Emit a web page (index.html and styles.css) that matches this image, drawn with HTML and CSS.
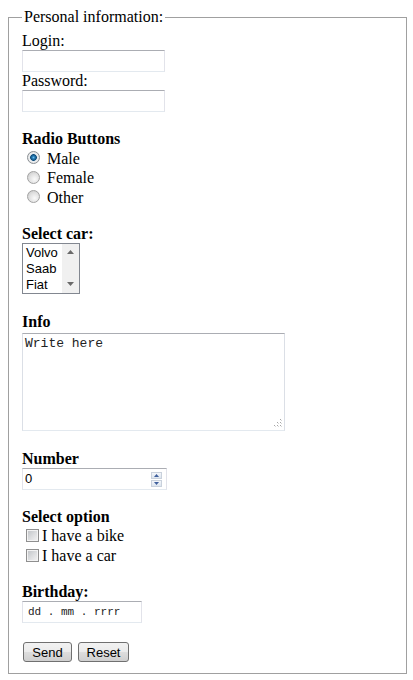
FILE: index.html
```html
<!DOCTYPE html>
<html lang="en">
<head>
<meta charset="utf-8">
<title>Form</title>
<link rel="stylesheet" href="styles.css">
</head>
<body>
<form class="form" onsubmit="return false">
  <fieldset class="fs">
    <legend class="legend">Personal information:</legend>
    <div class="content">
      <label class="lbl" for="login">Login:</label>
      <input class="text w143" id="login" type="text">
      <label class="lbl" for="pw">Password:</label>
      <input class="text w143" id="pw" type="password">

      <div class="heading mt18">Radio Buttons</div>
      <div class="group">
        <label class="radio-row"><input class="radio" type="radio" name="gender" checked><span class="opt-text">Male</span></label>
        <label class="radio-row"><input class="radio" type="radio" name="gender"><span class="opt-text">Female</span></label>
        <label class="radio-row"><input class="radio" type="radio" name="gender"><span class="opt-text">Other</span></label>
      </div>

      <div class="heading mt18">Select car:</div>
      <div class="listbox">
        <div class="options">
          <div class="option">Volvo</div>
          <div class="option">Saab</div>
          <div class="option">Fiat</div>
        </div>
        <div class="vscroll">
          <span class="sbtn"><svg class="arr" width="7" height="4" viewBox="0 0 7 4"><polygon points="0,4 7,4 3.5,0" fill="#6a6a6a"/></svg></span>
          <span class="sbtn"><svg class="arr" width="7" height="4" viewBox="0 0 7 4"><polygon points="0,0 7,0 3.5,4" fill="#6a6a6a"/></svg></span>
        </div>
      </div>

      <div class="heading mt19">Info</div>
      <div class="tawrap">
        <textarea class="area">Write here</textarea>
        <svg class="grip" width="9" height="9" viewBox="0 0 9 9">
          <rect x="6" y="0" width="1" height="1" fill="#a6a6a6"/><rect x="7" y="1" width="1" height="1" fill="#d8d8d8"/>
          <rect x="3" y="3" width="1" height="1" fill="#a6a6a6"/><rect x="4" y="4" width="1" height="1" fill="#d8d8d8"/>
          <rect x="6" y="3" width="1" height="1" fill="#a6a6a6"/><rect x="7" y="4" width="1" height="1" fill="#d8d8d8"/>
          <rect x="0" y="6" width="1" height="1" fill="#a6a6a6"/><rect x="1" y="7" width="1" height="1" fill="#d8d8d8"/>
          <rect x="3" y="6" width="1" height="1" fill="#a6a6a6"/><rect x="4" y="7" width="1" height="1" fill="#d8d8d8"/>
          <rect x="6" y="6" width="1" height="1" fill="#a6a6a6"/><rect x="7" y="7" width="1" height="1" fill="#d8d8d8"/>
        </svg>
      </div>

      <div class="heading mt19">Number</div>
      <div class="numbox">
        <input class="numinput" type="text" value="0">
        <div class="spin">
          <span class="spbtn"><svg width="5" height="3" viewBox="0 0 5 3"><polygon points="0,3 5,3 2.5,0" fill="#3f5f9c"/></svg></span>
          <span class="spbtn"><svg width="5" height="3" viewBox="0 0 5 3"><polygon points="0,0 5,0 2.5,3" fill="#3f5f9c"/></svg></span>
        </div>
      </div>

      <div class="heading mt18">Select option</div>
      <div class="group">
        <label class="check-row"><input class="check" type="checkbox"><span class="opt-text">I have a bike</span></label>
        <label class="check-row"><input class="check" type="checkbox"><span class="opt-text">I have a car</span></label>
      </div>

      <div class="heading mt17">Birthday:</div>
      <input class="text date" type="text" value="dd . mm . rrrr">

      <div class="buttons">
        <button class="btn btn-send" type="submit">Send</button>
        <button class="btn btn-reset" type="reset">Reset</button>
      </div>
    </div>
  </fieldset>
</form>
</body>
</html>
```
FILE: styles.css
```css
html, body {
  margin: 0;
  padding: 0;
  background: #fff;
}

body {
  padding: 8px;
  font-family: "Liberation Serif", "Times New Roman", serif;
  font-size: 16px;
  color: #000;
}

.form {
  margin: 0;
  width: 399px;
}

.fs {
  box-sizing: border-box;
  width: 399px;
  min-width: 0;
  margin: 0;
  padding: 6px 13px 11px 13px;
  border: 1px solid #a0a0a0;
}

.legend {
  padding: 0 2px;
  font-size: 16px;
  line-height: 18px;
}

.content {
  display: flex;
  flex-direction: column;
  align-items: flex-start;
}

.lbl {
  display: block;
  height: 18px;
  line-height: 18px;
}

.heading {
  height: 18px;
  line-height: 18px;
  font-weight: bold;
}

.mt17 { margin-top: 17px; }
.mt18 { margin-top: 18px; }
.mt19 { margin-top: 19px; }

.text {
  box-sizing: border-box;
  height: 22px;
  margin: 0;
  padding: 0 2px;
  border: 1px solid;
  border-color: #abadb3 #e2e3ea #e3e9ef #e2e3ea;
  background: #fff;
  font-family: "Liberation Sans", sans-serif;
  font-size: 13px;
  color: #000;
  outline: none;
}

.w143 { width: 143px; }

.group {
  display: flex;
  flex-direction: column;
}

.radio-row {
  display: flex;
  align-items: flex-start;
  height: 19.5px;
}

.check-row {
  display: flex;
  align-items: flex-start;
  height: 20px;
}

.opt-text {
  margin-top: 1.6px;
  line-height: 18px;
}

.radio {
  -webkit-appearance: none;
  appearance: none;
  flex: none;
  box-sizing: border-box;
  width: 13px;
  height: 13px;
  margin: 3px 7px 0 5px;
  border: 1px solid #a2a2a2;
  border-radius: 50%;
  background: radial-gradient(circle at 60% 65%, #fafafa 0, #e2e2e2 50%, #c4c4c4 100%);
}

.radio:checked {
  border-color: #8a8f94;
  background: radial-gradient(circle at 50% 50%, #6cc0f0 0, #2a7fb8 1.3px, #0c4a78 3px, #dfe7ee 3.7px, #efefef 4.5px, #cacaca 100%);
}

.check {
  -webkit-appearance: none;
  appearance: none;
  flex: none;
  box-sizing: border-box;
  width: 13px;
  height: 13px;
  margin: 3px 3px 0 4px;
  border: 1px solid #8f8f8f;
  background: linear-gradient(135deg, #bfc2c6 0, #dedfe1 55%, #f4f4f4 100%);
  box-shadow: inset 0 0 0 1px #f3f3f3;
}

.listbox {
  box-sizing: border-box;
  display: flex;
  width: 58px;
  height: 51px;
  border: 1px solid #828790;
  background: #fff;
  overflow: hidden;
}

.options {
  flex: 1;
  padding: 1px 0 0 3px;
  font-family: "Liberation Sans", sans-serif;
  font-size: 13px;
}

.option {
  height: 16px;
  line-height: 16px;
}

.vscroll {
  display: flex;
  flex-direction: column;
  justify-content: space-between;
  width: 17px;
  background: #f0f0f0;
}

.sbtn {
  display: flex;
  align-items: center;
  justify-content: center;
  height: 17px;
}

.tawrap {
  position: relative;
  margin-top: 2px;
  width: 263px;
  height: 98px;
}

.area {
  display: block;
  box-sizing: border-box;
  width: 100%;
  height: 100%;
  margin: 0;
  padding: 2px;
  border: 1px solid;
  border-color: #abadb3 #dbdfe6 #e3e9ef #dbdfe6;
  resize: none;
  overflow: hidden;
  font-family: "Liberation Mono", "Courier New", monospace;
  font-size: 13px;
  color: #222;
  outline: none;
}

.grip {
  position: absolute;
  right: 2px;
  bottom: 3px;
}

.numbox {
  box-sizing: border-box;
  display: flex;
  width: 145px;
  height: 22px;
  border: 1px solid;
  border-color: #abadb3 #e2e3ea #e3e9ef #e2e3ea;
  background: #fff;
}

.numinput {
  flex: 1;
  min-width: 0;
  height: 20px;
  margin: 0;
  padding: 0 0 0 2px;
  border: 0;
  background: transparent;
  font-family: "Liberation Sans", sans-serif;
  font-size: 13px;
  color: #000;
  outline: none;
}

.spin {
  display: flex;
  flex-direction: column;
  gap: 1px;
  margin: 3px 4px 0 0;
  width: 11px;
}

.spbtn {
  box-sizing: border-box;
  display: flex;
  align-items: center;
  justify-content: center;
  height: 7px;
  border: 1px solid #c9d1dc;
  background: linear-gradient(#f3f6fa, #dde5ef);
}

.date {
  width: 120px;
  margin-top: 0.5px;
  padding-left: 5px;
  font-family: "Liberation Mono", "Courier New", monospace;
  font-size: 11px;
  color: #222;
}

.buttons {
  display: flex;
  gap: 6px;
  margin-top: 19px;
  margin-left: 1px;
}

.btn {
  box-sizing: border-box;
  height: 20px;
  margin: 0;
  padding: 0;
  border: 1px solid #707070;
  border-radius: 3px;
  background: linear-gradient(#f2f2f2 0, #ebebeb 48%, #dddddd 52%, #cfcfcf 100%);
  font-family: "Liberation Sans", sans-serif;
  font-size: 13px;
  color: #000;
}

.btn-send { width: 49px; }
.btn-reset { width: 51px; }
```
